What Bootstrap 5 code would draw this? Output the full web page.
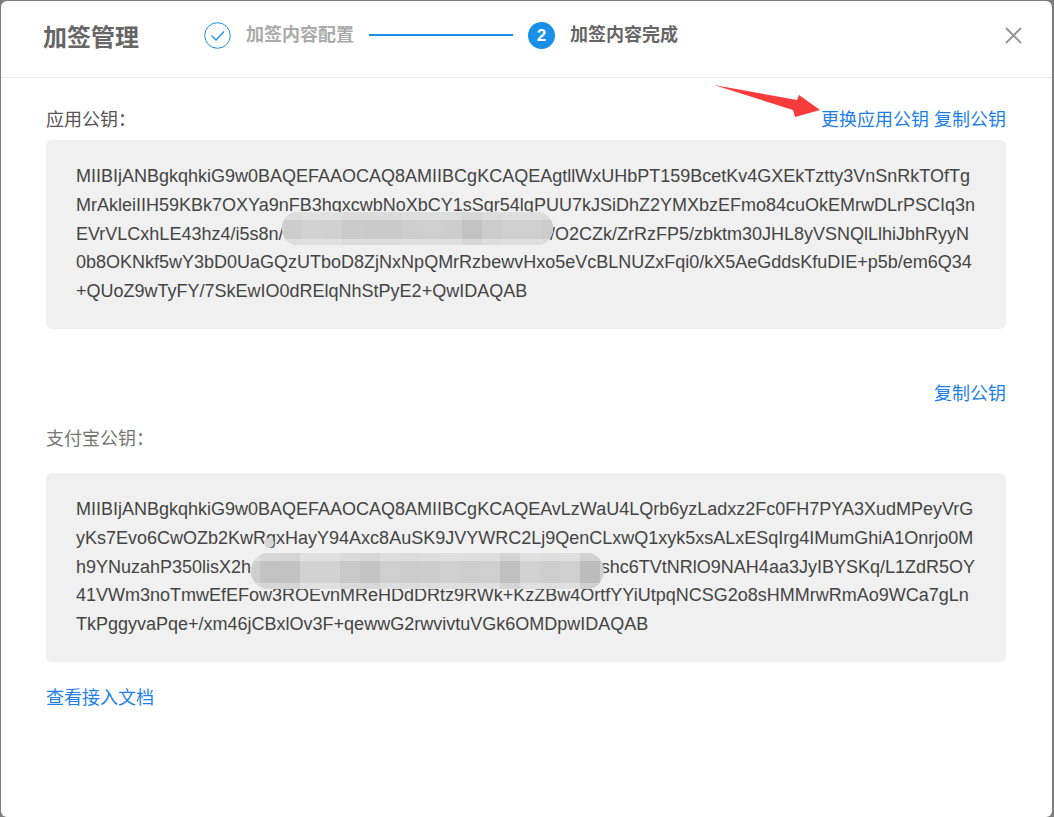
<!DOCTYPE html>
<html lang="zh">
<head>
<meta charset="utf-8">
<title>加签管理</title>
<link href="https://cdn.jsdelivr.net/npm/bootstrap@5.3.0/dist/css/bootstrap.min.css" rel="stylesheet">
<style>
html,body{height:100%;overflow:hidden}
body{background:#7d7d7d;font-family:"Liberation Sans","Noto Sans CJK SC",sans-serif;color:#333;padding:1px 2px 0 1px}
.dlg{background:#fff;height:816px;border-radius:6px;position:relative}
.dlg-head{height:77px;border-bottom:1px solid #e8e8e8;padding:0 30px 8px 42px}
.dlg-title{font-size:24px;font-weight:700;color:#666;width:161px;line-height:1;margin-top:6px}
.step-ico{width:27px;height:27px;flex:none}
.step-num{width:27px;height:27px;border-radius:50%;background:#1890e8;color:#fff;font-size:17px;font-weight:700;flex:none;line-height:1}
.step-txt{font-size:18px;font-weight:700;color:#aaa;margin-left:15px;line-height:1}
.step-txt.on{color:#666}
.step-line{width:144px;height:2px;background:#1890e8;margin:0 15px}
.close-x{width:17px;height:17px;display:block}
.dlg-body{padding:0 46px 0 45px;font-size:18px}
.lbl{color:#555;line-height:28px}
.lbl.dim{color:#777}
.act{color:#1e7fe8;text-decoration:none;line-height:28px}
.act-pair{gap:5px}
.keybox{background:#f0f0f0;border-radius:6px;padding:22px 30px 23px;line-height:28.8px;color:#444;position:relative;white-space:nowrap}
.first-row{padding-top:28px}
.box1{margin-top:6px}
.copy-row{margin-top:51px}
.lbl2{margin-top:17px}
.box2{margin-top:20px}
.doc{margin-top:22px;display:inline-block}
.cut1{padding-right:7px}
.cut2{padding-right:1px}
.smear{position:absolute;display:flex;overflow:hidden}
.smear i{flex:none;width:20px;display:block}
.smear::before,.smear::after{content:"";position:absolute;left:0;right:0;background:rgba(255,255,255,.32)}
.smear::before{top:0;height:8px}
.smear::after{bottom:0;height:6px}
.s1{left:236px;top:72px;width:271px;height:33px;border-radius:16px;background:#cfcfcf}
.s2{left:205px;top:80px;width:353px;height:36px;border-radius:18px;background:#d0d0d0}
.dot{position:absolute;left:218px;top:65px;width:10px;height:10px;border-radius:50%;background:#d6d6d6}
.arrow{position:absolute;left:712px;top:83px;width:112px;height:36px}
</style>
</head>
<body>
<div class="dlg">
  <div class="dlg-head d-flex align-items-center">
    <div class="dlg-title">加签管理</div>
    <svg class="step-ico" viewBox="0 0 27 27"><circle cx="13.5" cy="13.5" r="12.8" fill="none" stroke="#1890e8" stroke-width="1"/><path d="M7.5 13.5l4.5 4.5 8-8.5" fill="none" stroke="#1890e8" stroke-width="1.3"/></svg>
    <span class="step-txt">加签内容配置</span>
    <span class="step-line"></span>
    <span class="step-num d-flex align-items-center justify-content-center">2</span>
    <span class="step-txt on">加签内容完成</span>
    <svg class="close-x ms-auto" viewBox="0 0 17 17"><path d="M1 1l15 15M16 1L1 16" stroke="#999" stroke-width="2" fill="none"/></svg>
  </div>
  <div class="dlg-body">
    <div class="d-flex justify-content-between first-row">
      <span class="lbl">应用公钥：</span>
      <span class="d-flex act-pair"><a class="act" href="#">更换应用公钥</a><a class="act" href="#">复制公钥</a></span>
    </div>
    <div class="keybox box1">
      <div>MIIBIjANBgkqhkiG9w0BAQEFAAOCAQ8AMIIBCgKCAQEAgtllWxUHbPT159BcetKv4GXEkTztty3VnSnRkTOfTg</div>
      <div>MrAkleiIIH59KBk7OXYa9nFB3hqxcwbNoXbCY1sSqr54lqPUU7kJSiDhZ2YMXbzEFmo84cuOkEMrwDLrPSCIq3n</div>
      <div class="d-flex justify-content-between cut1"><span>EVrVLCxhLE43hz4/i5s8n/</span><span>/O2CZk/ZrRzFP5/zbktm30JHL8yVSNQlLlhiJbhRyyN</span></div>
      <div>0b8OKNkf5wY3bD0UaGQzUTboD8ZjNxNpQMrRzbewvHxo5eVcBLNUZxFqi0/kX5AeGddsKfuDIE+p5b/em6Q34</div>
      <div>+QUoZ9wTyFY/7SkEwIO0dRElqNhStPyE2+QwIDAQAB</div>
      <div class="smear s1"><i style="background:#cdcdcd"></i><i style="background:#d2d2d2"></i><i style="background:#d1d1d1"></i><i style="background:#cbcbcb"></i><i style="background:#cacaca"></i><i style="background:#cacaca"></i><i style="background:#cecece"></i><i style="background:#cfcfcf"></i><i style="background:#cdcdcd"></i><i style="background:#c3c3c3"></i><i style="background:#cccccc"></i><i style="background:#cfcfcf"></i><i style="background:#cfcfcf"></i><i style="background:#cccccc"></i></div>
    </div>
    <div class="d-flex justify-content-end copy-row"><a class="act" href="#">复制公钥</a></div>
    <div class="lbl dim lbl2">支付宝公钥：</div>
    <div class="keybox box2">
      <div>MIIBIjANBgkqhkiG9w0BAQEFAAOCAQ8AMIIBCgKCAQEAvLzWaU4LQrb6yzLadxz2Fc0FH7PYA3XudMPeyVrG</div>
      <div>yKs7Evo6CwOZb2KwRgxHayY94Axc8AuSK9JVYWRC2Lj9QenCLxwQ1xyk5xsALxESqIrg4IMumGhiA1Onrjo0M</div>
      <div class="d-flex justify-content-between cut2"><span>h9YNuzahP350lisX2h</span><span>shc6TVtNRlO9NAH4aa3JyIBYSKq/L1ZdR5OY</span></div>
      <div>41VWm3noTmwEfEFow3ROEvnMReHDdDRtz9RWk+KzZBw4OrtfYYiUtpqNCSG2o8sHMMrwRmAo9WCa7gLn</div>
      <div>TkPggyvaPqe+/xm46jCBxlOv3F+qewwG2rwvivtuVGk6OMDpwIDAQAB</div>
      <div class="dot"></div>
      <div class="smear s2"><i style="background:#cfcfcf;width:9px"></i><i style="background:#c3c3c3"></i><i style="background:#c2c2c2"></i><i style="background:#d2d2d2"></i><i style="background:#d2d2d2"></i><i style="background:#c9c9c9"></i><i style="background:#c4c4c4"></i><i style="background:#cfcfcf"></i><i style="background:#cccccc"></i><i style="background:#cdcdcd"></i><i style="background:#d0d0d0"></i><i style="background:#cecece"></i><i style="background:#cfcfcf"></i><i style="background:#c0c0c0"></i><i style="background:#d2d2d2"></i><i style="background:#cecece"></i><i style="background:#d0d0d0"></i><i style="background:#bcbcbc"></i></div>
    </div>
    <a class="act doc" href="#">查看接入文档</a>
  </div>
  <svg class="arrow" viewBox="0 0 112 36"><path d="M1 1L84 16 86 11 107 26 82 33 80 26Z" fill="#f93b3b"/></svg>
</div>
<script src="https://cdn.jsdelivr.net/npm/bootstrap@5.3.0/dist/js/bootstrap.bundle.min.js"></script>
</body>
</html>
